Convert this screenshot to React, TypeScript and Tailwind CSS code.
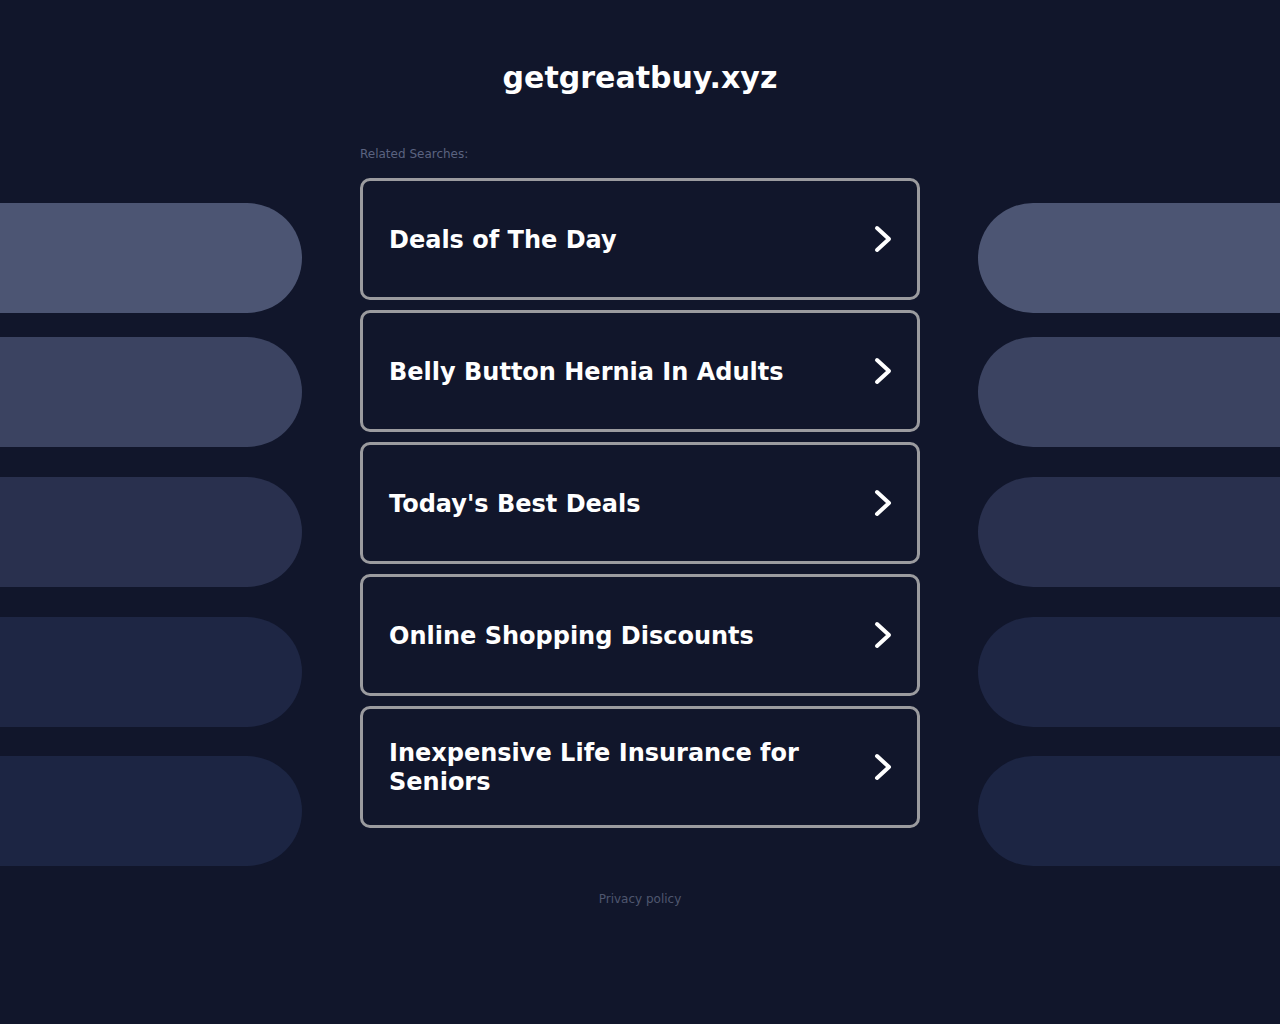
const searches = [
  "Deals of The Day",
  "Belly Button Hernia In Adults",
  "Today's Best Deals",
  "Online Shopping Discounts",
  "Inexpensive Life Insurance for Seniors",
];

const pills = [
  { color: "bg-[#4c5573]", gap: "mt-[203px]" },
  { color: "bg-[#3b4361]", gap: "mt-[24px]" },
  { color: "bg-[#29304e]", gap: "mt-[30px]" },
  { color: "bg-[#1e2644]", gap: "mt-[30px]" },
  { color: "bg-[#1c2543]", gap: "mt-[29px]" },
];

function Chevron() {
  return (
    <svg width="22" height="30" viewBox="0 0 22 30" fill="none" className="shrink-0">
      <path d="M4 4 L16 15 L4 26" stroke="#ffffff" strokeWidth="4" strokeLinecap="round" strokeLinejoin="round" />
    </svg>
  );
}

function PillColumn({ side }: { side: "left" | "right" }) {
  return (
    <div className="flex w-[302px] flex-col">
      {pills.map((p, i) => (
        <div
          key={i}
          className={`${p.gap} ${p.color} h-[110px] w-full ${side === "left" ? "rounded-r-[55px]" : "rounded-l-[55px]"}`}
        />
      ))}
    </div>
  );
}

export default function App() {
  return (
    <div className="min-h-screen bg-[#11162b] font-['DejaVu_Sans',sans-serif]">
      <div className="flex justify-between">
        <PillColumn side="left" />
        <div className="flex w-[560px] flex-col">
          <h1 className="mt-[59px] text-center text-[30px] font-bold leading-[38px] text-white">getgreatbuy.xyz</h1>
          <p className="mt-[50px] text-[12px] leading-[14px] text-[#5b6380]">Related Searches:</p>
          <div className="mt-[17px] flex flex-col gap-[10px]">
            {searches.map((s) => (
              <a
                key={s}
                href="#"
                className="flex h-[122px] items-center justify-between rounded-[10px] border-[3px] border-[#9b9b9f] bg-[#11162b] pl-[26px] pr-[22px]"
              >
                <span className="max-w-[440px] pt-[2px] text-[24px] font-bold leading-[29px] text-white">{s}</span>
                <Chevron />
              </a>
            ))}
          </div>
          <p className="mt-[64px] text-center text-[12px] leading-[14px] text-[#4f566f]">Privacy policy</p>
        </div>
        <PillColumn side="right" />
      </div>
    </div>
  );
}
